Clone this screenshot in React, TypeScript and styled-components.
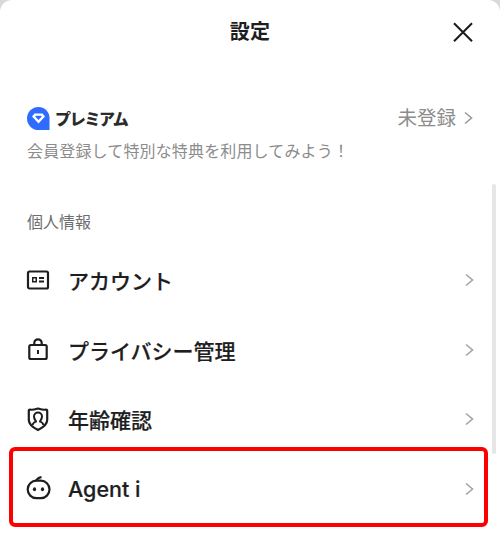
import React from 'react'
import styled, { createGlobalStyle } from 'styled-components'

const GlobalStyle = createGlobalStyle`
  html, body {
    margin: 0;
    padding: 0;
    background: #d9d9d9;
  }
  body {
    font-family: Inter, "Noto Sans CJK JP", sans-serif;
  }
`

const Sheet = styled.div`
  position: relative;
  width: 500px;
  height: 546px;
  overflow: hidden;
  background: #ffffff;
  border-radius: 12px 12px 0 0;
`

const Header = styled.header`
  height: 64px;
  display: flex;
  align-items: center;
  justify-content: center;
  position: relative;
`

const Title = styled.h1`
  margin: 0;
  font-size: 20px;
  font-weight: 700;
  letter-spacing: 0.2px;
  color: #1e1e1e;
  line-height: 24px;
`

const CloseButton = styled.button`
  position: absolute;
  top: 20px;
  right: 25px;
  width: 24px;
  height: 24px;
  padding: 0;
  border: 0;
  background: none;
  display: flex;
`

const Premium = styled.section`
  padding: 40px 27px 0 27px;
`

const PremiumTop = styled.div`
  display: flex;
  align-items: center;
  justify-content: space-between;
  height: 28px;
`

const Brand = styled.div`
  display: flex;
  align-items: center;
  gap: 5px;
`

const BrandName = styled.span`
  font-size: 16px;
  font-weight: 900;
  color: #2b2b2b;
  letter-spacing: -1.300px;
`

const Status = styled.div`
  display: flex;
  align-items: center;
  gap: 5px;
  font-size: 19.500px;
  line-height: 26px;
  color: #8c8c8c;
  margin-right: -2px;
`

const Note = styled.p`
  margin: 9px 0 0 0;
  font-size: 16px;
  line-height: 20px;
  letter-spacing: 0.150px;
  color: #8c8c8c;
`

const SectionLabel = styled.h2`
  margin: 51px 0 0 27px;
  font-size: 16px;
  line-height: 20px;
  font-weight: 400;
  color: #6e6e6e;
`

const List = styled.ul`
  margin: 13px 0 0 0;
  padding: 0;
  list-style: none;
`

const Row = styled.li<{ $marked?: boolean }>`
  position: relative;
  height: 69.700px;
  display: flex;
  align-items: center;
  padding: 0 24px 0 27px;
  ${(p) =>
    p.$marked &&
    `
    &::after {
      content: '';
      position: absolute;
      left: 9px;
      top: -7px;
      width: 479px;
      height: 79.500px;
      box-sizing: border-box;
      border: 4px solid #ff0000;
      border-radius: 6px;
    }
  `}
`

const RowIcon = styled.span`
  width: 24px;
  height: 24px;
  margin-left: -1px;
  display: flex;
  color: #1e1e1e;

  svg {
    overflow: visible;
  }
`

const RowLabel = styled.span<{ $latin?: boolean }>`
  flex: 1;
  margin-left: 18px;
  font-size: ${(p) => (p.$latin ? '21.500px' : '21px')};
  font-weight: 500;
  -webkit-text-stroke: 0.200px #1e1e1e;
  color: #1e1e1e;
`

const Scrollbar = styled.div`
  position: absolute;
  left: 492px;
  top: 184px;
  width: 4px;
  height: 270px;
  border-radius: 2px;
  background: #e6e6e6;
`

const Chevron = ({ color = '#a3a3a3', size = 14 }: { color?: string; size?: number }) => (
  <svg width={size} height={size} viewBox="0 0 14 14" fill="none">
    <path d="M4 1.500 L10.500 7 L4 12.500" stroke={color} strokeWidth="1.600" />
  </svg>
)

const icons = {
  account: (
    <svg width="24" height="24" viewBox="0 0 24 24" fill="none">
      <rect x="2" y="3.500" width="20" height="17" rx="1.500" stroke="currentColor" strokeWidth="2.200" />
      <rect x="6" y="9" width="5" height="5.500" fill="currentColor" />
      <rect x="7.500" y="10.500" width="2" height="2.500" fill="#ffffff" />
      <path d="M13 10h5M13 13.500h5" stroke="currentColor" strokeWidth="1.800" />
    </svg>
  ),
  lock: (
    <svg width="24" height="24" viewBox="0 0 24 24" fill="none">
      <rect x="3.300" y="7" width="17.400" height="14" rx="1.500" stroke="currentColor" strokeWidth="2.200" />
      <path d="M8.300 7V5a3.700 3.700 0 0 1 7.400 0v2" stroke="currentColor" strokeWidth="2.200" />
      <rect x="11" y="12" width="2" height="4" fill="currentColor" />
    </svg>
  ),
  age: (
    <svg width="24" height="24" viewBox="0 0 24 24" fill="none">
      <path
        d="M4 2.500c2.500.8 4 .2 8-1 4 1.200 5.500 1.800 8 1 .8 0 1.200.5 1.200 1.200v9.300c0 4-4.200 7.500-9.200 10-5-2.500-9.200-6-9.200-10V3.700c0-.7.4-1.200 1.200-1.200z"
        stroke="currentColor"
        strokeWidth="2.200"
        strokeLinejoin="round"
      />
      <path
        d="M6.500 18c.6-2.500 2.500-3 3.500-3.500 0-1-2-2-2-5a4 4 0 0 1 8 0c0 3-2 4-2 5 1 .5 2.900 1 3.500 3.500"
        stroke="currentColor"
        strokeWidth="2"
      />
    </svg>
  ),
  agent: (
    <svg width="24" height="24" viewBox="0 0 24 24" fill="none">
      <rect x="1.700" y="3.700" width="21.800" height="17.500" rx="8.700" stroke="currentColor" strokeWidth="2.200" />
      <path d="M10 3.700C11 1.800 13 0.500 15.500 0" stroke="currentColor" strokeWidth="2.200" />
      <ellipse cx="8.500" cy="12.200" rx="1.600" ry="2" fill="currentColor" />
      <ellipse cx="16.500" cy="12.200" rx="1.600" ry="2" fill="currentColor" />
    </svg>
  ),
}

const rows = [
  { label: 'アカウント', icon: icons.account },
  { label: 'プライバシー管理', icon: icons.lock },
  { label: '年齢確認', icon: icons.age },
  { label: 'Agent i', icon: icons.agent, marked: true, latin: true },
]

export default function App() {
  return (
    <>
      <GlobalStyle />
      <Sheet>
        <Header>
          <Title>設定</Title>
          <CloseButton aria-label="閉じる">
            <svg width="24" height="24" viewBox="0 0 24 24" fill="none">
              <path d="M3 3.300 L21 21.200 M21 3.300 L3 21.200" stroke="#1a1a1a" strokeWidth="2" />
            </svg>
          </CloseButton>
        </Header>
        <Premium>
          <PremiumTop>
            <Brand>
              <svg width="23" height="23" viewBox="0 0 23 23">
                <path d="M11.500 0a11 11 0 0 1 11 11v12h-11a11.500 11.500 0 0 1 0-23z" fill="#2f6bff" />
                <path
                  d="M5 9.500 L7.500 6.500 H15.500 L18 9.500 L11.500 16.500 Z M8.200 9.500 L11.500 13 L14.800 9.500 L14 8.700 H9 Z"
                  fill="#ffffff"
                  fillRule="evenodd"
                />
              </svg>
              <BrandName>プレミアム</BrandName>
            </Brand>
            <Status>
              未登録
              <Chevron color="#9a9a9a" />
            </Status>
          </PremiumTop>
          <Note>会員登録して特別な特典を利用してみよう！</Note>
        </Premium>
        <SectionLabel>個人情報</SectionLabel>
        <List>
          {rows.map((r) => (
            <Row key={r.label} $marked={r.marked}>
              <RowIcon>{r.icon}</RowIcon>
              <RowLabel $latin={r.latin}>{r.label}</RowLabel>
              <Chevron />
            </Row>
          ))}
        </List>
        <Scrollbar />
      </Sheet>
    </>
  )
}
